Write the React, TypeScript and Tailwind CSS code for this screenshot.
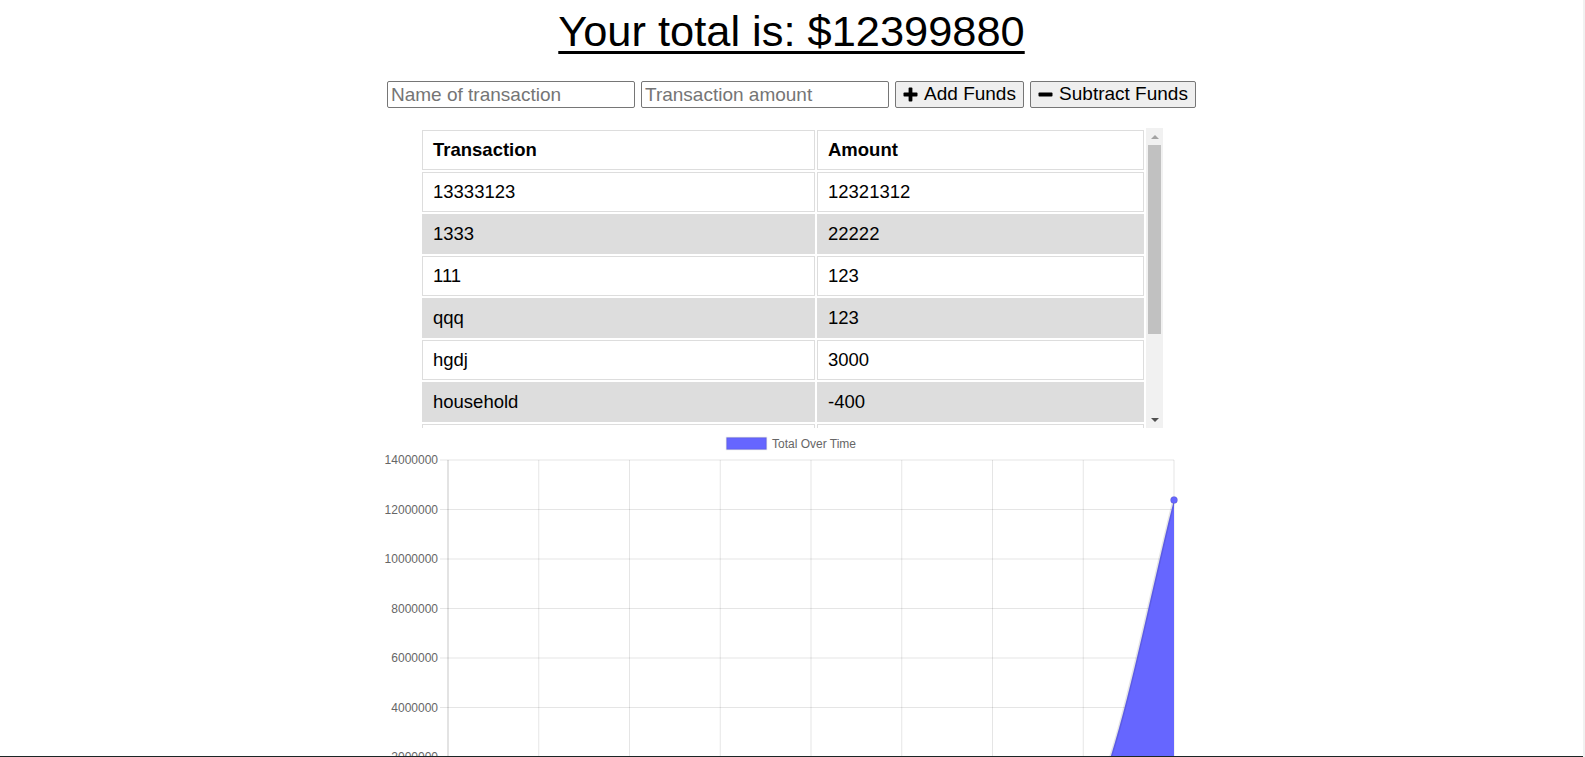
import React from "react";

type Row = { name: string; amount: string };

const rows: Row[] = [
  { name: "13333123", amount: "12321312" },
  { name: "1333", amount: "22222" },
  { name: "111", amount: "123" },
  { name: "qqq", amount: "123" },
  { name: "hgdj", amount: "3000" },
  { name: "household", amount: "-400" },
  { name: "food", amount: "-500" },
  { name: "rent", amount: "-1000" },
];

const yTicks = ["14000000", "12000000", "10000000", "8000000", "6000000", "4000000", "2000000"];

const PlusIcon = () => (
  <svg width="15" height="15" viewBox="0 0 15 15" className="shrink-0">
    <rect x="5.6" y="0.5" width="3.8" height="14" rx="0.9" fill="#000" />
    <rect x="0.5" y="5.6" width="14" height="3.8" rx="0.9" fill="#000" />
  </svg>
);

const MinusIcon = () => (
  <svg width="15" height="15" viewBox="0 0 15 15" className="shrink-0">
    <rect x="0.5" y="5.6" width="14" height="3.8" rx="0.9" fill="#000" />
  </svg>
);

const Chart = () => {
  const gridX = Array.from({ length: 9 }, (_, i) => 448 + i * 90.75);
  return (
    <svg width="817" height="329" viewBox="383 428 817 329" className="block shrink-0">
      {/* legend */}
      <rect x="726.5" y="437.5" width="40" height="12" fill="#6666ff" stroke="rgba(0,0,0,0.1)" strokeWidth="1.5" />
      <text x="772" y="447.5" fontSize="12" fill="#666" fontFamily="'Liberation Sans', Arial, sans-serif">
        Total Over Time
      </text>

      {/* horizontal grid + ticks */}
      {yTicks.map((t, i) => {
        const y = 460 + i * 49.5;
        return (
          <g key={t}>
            <line x1="440" x2="1174" y1={y} y2={y} stroke="rgba(0,0,0,0.1)" strokeWidth="1" />
            <text
              x="438"
              y={y + 4.3}
              textAnchor="end"
              fontSize="12"
              fill="#666"
              fontFamily="'Liberation Sans', Arial, sans-serif"
            >
              {t}
            </text>
          </g>
        );
      })}

      {/* vertical grid */}
      {gridX.map((x, i) => (
        <line
          key={x}
          x1={x}
          x2={x}
          y1="460"
          y2="810"
          stroke={i === 0 ? "rgba(0,0,0,0.22)" : "rgba(0,0,0,0.1)"}
          strokeWidth="1"
        />
      ))}

      {/* area */}
      <path d="M1084 806 C1110 806 1148 600 1174 500 L1174 810 L1084 810 Z" fill="#6666ff" />
      <path d="M1084 806 C1110 806 1148 600 1174 500" fill="none" stroke="rgba(0,0,0,0.1)" strokeWidth="3" />
      <circle cx="1174" cy="500" r="3.5" fill="#6666ff" stroke="rgba(0,0,0,0.1)" strokeWidth="1" />
    </svg>
  );
};

const Scrollbar = () => (
  <div className="w-[17px] h-full bg-[#f1f1f1] flex flex-col shrink-0">
    <div className="h-[17px] flex items-center justify-center">
      <div className="w-0 h-0 border-l-[4px] border-r-[4px] border-b-[4px] border-l-transparent border-r-transparent border-b-[#a3a3a3]" />
    </div>
    <div className="h-[189px] mx-[2px] bg-[#c1c1c1]" />
    <div className="flex-1" />
    <div className="h-[17px] flex items-center justify-center">
      <div className="w-0 h-0 border-l-[4px] border-r-[4px] border-t-[4px] border-l-transparent border-r-transparent border-t-[#505050]" />
    </div>
  </div>
);

export default function App() {
  return (
    <div className="h-[757px] w-full flex bg-white overflow-hidden font-['Liberation_Sans',Arial,sans-serif] text-black">
      <div className="flex-1 flex flex-col min-w-0">
        <div className="flex-1 overflow-hidden flex flex-col items-center">
          {/* Title */}
          <h1 className="mt-[7px] text-[43.4px] leading-[49px] underline decoration-[3px] underline-offset-[5px]">
            Your total is: $12399880
          </h1>

          {/* Form */}
          <div className="mt-[25px] flex items-center gap-[6px]">
            <input
              type="text"
              placeholder="Name of transaction"
              className="w-[248px] h-[27px] border border-[#767676] rounded-[2px] px-[3px] pt-[1px] text-[19px] placeholder:text-[#757575] outline-none"
            />
            <input
              type="text"
              placeholder="Transaction amount"
              className="w-[248px] h-[27px] border border-[#767676] rounded-[2px] px-[3px] pt-[1px] text-[19px] placeholder:text-[#757575] outline-none"
            />
            <button className="w-[129px] h-[27px] border border-[#767676] rounded-[2px] bg-[#efefef] flex items-center justify-center gap-[6px] text-[19px]">
              <PlusIcon />
              <span>Add Funds</span>
            </button>
            <button className="w-[166px] h-[27px] border border-[#767676] rounded-[2px] bg-[#efefef] flex items-center justify-center gap-[6px] text-[19px]">
              <MinusIcon />
              <span>Subtract Funds</span>
            </button>
          </div>

          {/* Table */}
          <div className="mt-[20px] w-[743px] h-[300px] flex shrink-0">
            <div className="flex-1 overflow-hidden">
              <table className="w-full table-fixed border-separate border-spacing-[2px] text-[18.5px]">
                <colgroup>
                  <col className="w-[393px]" />
                  <col />
                </colgroup>
                <thead>
                  <tr>
                    <th className="h-[40px] border border-[#dddddd] px-[10px] text-left font-bold">Transaction</th>
                    <th className="h-[40px] border border-[#dddddd] px-[10px] text-left font-bold">Amount</th>
                  </tr>
                </thead>
                <tbody>
                  {rows.map((r, i) => (
                    <tr key={i} className={i % 2 === 1 ? "bg-[#dddddd]" : "bg-white"}>
                      <td className="h-[40px] border border-[#dddddd] px-[10px]">{r.name}</td>
                      <td className="h-[40px] border border-[#dddddd] px-[10px]">{r.amount}</td>
                    </tr>
                  ))}
                </tbody>
              </table>
            </div>
            <Scrollbar />
          </div>

          {/* Chart */}
          <Chart />
        </div>
        <div className="h-px bg-[#1c2626] shrink-0" />
      </div>
      <div className="w-[2px] bg-[#f1f1f1] shrink-0" />
    </div>
  );
}
